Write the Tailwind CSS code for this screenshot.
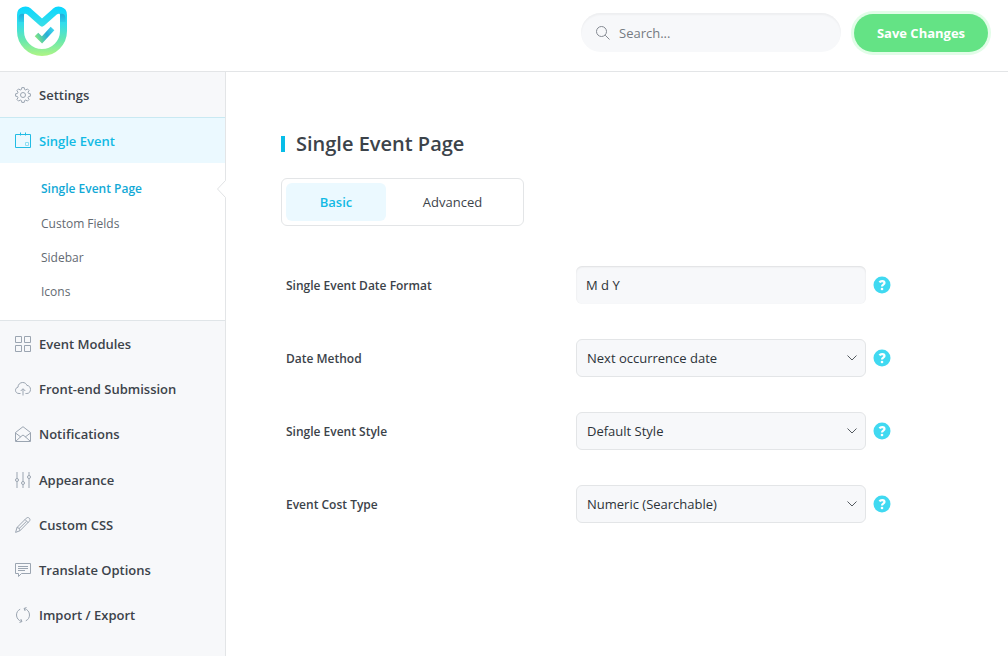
<!DOCTYPE html>
<html lang="en">
<head>
<meta charset="utf-8">
<meta name="viewport" content="width=device-width, initial-scale=1">
<title>Single Event Page</title>
<script src="https://cdn.jsdelivr.net/npm/@tailwindcss/browser@4"></script>
</head>
<body class="flex min-h-screen flex-col bg-white font-['Segoe_UI','Open_Sans','Noto_Sans',sans-serif] text-[13px] text-[#3c434a]">
<header class="flex h-[72px] shrink-0 items-start justify-between border-b border-[#e3e5e7] pr-5 pl-4">
  <a href="#" aria-label="Home" class="mt-1.5">
    <svg width="52" height="52" viewBox="16 6 52 52" fill="none">
      <defs>
        <linearGradient id="body" x1="0" y1="7" x2="0" y2="56" gradientUnits="userSpaceOnUse"><stop stop-color="#0bd7ff"/><stop offset=".35" stop-color="#35ddea"/><stop offset=".68" stop-color="#68e8ae"/><stop offset="1" stop-color="#b0f584"/></linearGradient>
        <linearGradient id="shade" x1="0" y1="13" x2="0" y2="25" gradientUnits="userSpaceOnUse"><stop stop-color="#24a9d8"/><stop offset="1" stop-color="#24a9d8" stop-opacity="0"/></linearGradient>
        <linearGradient id="tick" x1="36" y1="38" x2="53" y2="30" gradientUnits="userSpaceOnUse"><stop stop-color="#86e582"/><stop offset=".35" stop-color="#46c5b4"/><stop offset=".6" stop-color="#27add9"/><stop offset="1" stop-color="#3bd3ec"/></linearGradient>
      </defs>
      <path d="M20.500 31V15C20.500 10 26 9 29 11.500L42 23L55 11.500C58 9 63.500 10 63.500 15V31a21.500 21.500 0 0 1-43 0Z" stroke="url(#body)" stroke-width="7" stroke-linejoin="round"/>
      <path d="M18.500 22V18c0-3 2-5 5.500-4v8ZM65.500 22V18c0-3-2-5-5.500-4v8Z" fill="url(#shade)"/>
      <path d="M36.500 34.500l5.500 5.500L52.500 28.500" stroke="url(#tick)" stroke-width="5"/>
    </svg>
  </a>
  <div class="flex items-center gap-[13px] pt-[13px]">
    <label class="flex h-[39px] w-[260px] items-center gap-2 rounded-full bg-[#f7f8fa] px-3.5 shadow-[inset_0_2px_2px_rgba(0,0,0,0.04)]">
      <svg width="16" height="16" viewBox="0 0 16 16" fill="none" stroke="#858a92" class="shrink-0"><circle cx="6.500" cy="6.500" r="5"/><path d="M10.200 10.200L14.500 14.500"/></svg>
      <input type="search" aria-label="Search" placeholder="Search..." class="min-w-0 flex-1 bg-transparent pt-0.5 outline-none placeholder:text-[#757b82]">
    </label>
    <button type="button" class="h-[38px] w-[134px] rounded-full bg-[#64e385] pt-0.5 font-bold text-white ring-[3px] ring-[#e2fde8]">Save Changes</button>
  </div>
</header>

<div class="flex flex-1">
  <nav aria-label="Settings sections" class="w-[226px] shrink-0 border-r border-[#e3e5e7] bg-[#f7f8fa] font-semibold">
    <a href="#" class="flex h-[45px] items-center gap-2 pl-[15px]">
      <svg width="16" height="16" viewBox="0 0 16 16" fill="none" stroke="#9ba5b1"><circle cx="8" cy="8" r="2.500"/><path stroke-linejoin="round" d="M6.800.600h2.400l.4 1.900 1.200.5 1.600-1.100 1.700 1.700L13 5.200l.5 1.200 1.900.4v2.400l-1.900.4-.5 1.200 1.100 1.600-1.700 1.700-1.600-1.100-1.200.5-.4 1.900H6.800l-.4-1.900-1.200-.5-1.600 1.100-1.700-1.700L3 10.800l-.5-1.200-1.900-.4V6.800l1.900-.4L3 5.200 1.900 3.600l1.700-1.700L5.200 3l1.200-.5Z"/></svg>
      <span class="pt-0.5">Settings</span>
    </a>
    <a href="#" class="flex h-[46px] items-center gap-2 border-t border-[#c9e9f2] bg-[#ebf9ff] pl-[15px] text-[#12bae4]">
      <svg width="17" height="17" viewBox="0 0 17 17" fill="none" stroke="#22bce4" class="-mr-px"><path d="M.500 2.500h15v13H.500ZM5.500.500v3M10.500.500v3"/><path stroke="#8eddf1" d="M10.500 10.500h3v3h-3Z"/></svg>
      <span class="pt-0.5">Single Event</span>
    </a>
    <div class="relative border-b border-[#e0e5e8] bg-white pt-2 pb-3 pl-[41px] text-[12px] font-normal text-[#636a72]">
      <a href="#" class="flex h-[35px] items-center font-semibold text-[#12a9d6]">Single Event Page</a>
      <a href="#" class="flex h-[34px] items-center pt-0.5">Custom Fields</a>
      <a href="#" class="flex h-[34px] items-center pt-0.5">Sidebar</a>
      <a href="#" class="flex h-[34px] items-center pt-0.5">Icons</a>
      <svg width="9" height="18" viewBox="0 0 9 18" fill="#fff" class="absolute top-[17px] -right-px"><path d="M9 0v18L.500 9Z"/><path d="M8.500.500L.500 9l8 8.500" fill="none" stroke="#e0e2e4"/></svg>
    </div>
    <a href="#" class="flex h-[45px] items-center gap-2 pl-[15px]">
      <svg width="16" height="16" viewBox="0 0 16 16" fill="none" stroke="#9ba5b1"><path d="M.500.500h6v6h-6ZM9.500.500h6v6h-6ZM.500 9.500h6v6h-6ZM9.500 9.500h6v6h-6Z"/></svg>
      <span class="pt-0.5">Event Modules</span>
    </a>
    <a href="#" class="flex h-[45px] items-center gap-2 pl-[15px]">
      <svg width="16" height="16" viewBox="0 0 16 16" fill="none" stroke="#9ba5b1"><path d="M5.500 12.500H4C1.900 12.500.500 11.100.500 9.300.500 7.600 1.500 6.500 3 6.200 3 3.500 5 1.500 7.700 1.500c2 0 3.600 1.100 4.200 2.900 2.100.1 3.600 1.800 3.600 4 0 2.400-1.500 4.100-3.600 4.100h-1.400M8 14.500V8M5.700 10L8 7.700 10.300 10"/></svg>
      <span class="pt-0.5">Front-end Submission</span>
    </a>
    <a href="#" class="flex h-[46px] items-center gap-2 pl-[15px]">
      <svg width="16" height="16" viewBox="0 0 16 16" fill="none" stroke="#9ba5b1"><path d="M.500 6.500L8 .700l7.500 5.800v9H.500ZM.500 7l5.300 4M15.500 7l-5.300 4M1 15l5-4.500 2-1.500 2 1.500 5 4.500"/></svg>
      <span class="pt-0.5">Notifications</span>
    </a>
    <a href="#" class="flex h-[45px] items-center gap-2 pl-[15px]">
      <svg width="16" height="16" viewBox="0 0 16 16" fill="none" stroke="#9ba5b1"><path d="M2 0v6.500M2 9.500V16M8 0v9.500M8 12.500V16M14 0v3.500M14 6.500V16"/><circle cx="2" cy="8" r="1.500"/><circle cx="8" cy="11" r="1.500"/><circle cx="14" cy="5" r="1.500"/></svg>
      <span class="pt-0.5">Appearance</span>
    </a>
    <a href="#" class="flex h-[45px] items-center gap-2 pl-[15px]">
      <svg width="16" height="16" viewBox="0 0 16 16" fill="none" stroke="#9ba5b1" stroke-linejoin="round"><path d="M.600 15.400L2 10.500 11.300 1.200c1-1 2.200-.8 3 0s1 2 0 3L5 13.700ZM2 10.500c1.700.1 2.800 1.400 3 3.200M10 2.500L13.300 5.800M4 11.700l7.500-7.400"/></svg>
      <span class="pt-0.5">Custom CSS</span>
    </a>
    <a href="#" class="flex h-[45px] items-center gap-2 pl-[15px]">
      <svg width="16" height="16" viewBox="0 0 16 16" fill="none" stroke="#9ba5b1"><path d="M.500 1.500h15v10h-9l-3 3v-3h-3ZM3 4.500h10M3 6.500h10M3 8.500h7"/></svg>
      <span class="pt-0.5">Translate Options</span>
    </a>
    <a href="#" class="flex h-[45px] items-center gap-2 pl-[15px]">
      <svg width="16" height="16" viewBox="0 0 16 16" fill="none" stroke="#9ba5b1"><path d="M5.200 2.200C2.800 3.300 1.500 5.500 1.500 8c0 3 2 5.600 5 6.500M4.500 15.500l2.500-1-1.200-2.500M10.800 13.800c2.400-1.100 3.700-3.300 3.700-5.800 0-3-2-5.600-5-6.500M11.500.500L9 1.500 10.200 4"/></svg>
      <span class="pt-0.5">Import / Export</span>
    </a>
  </nav>

  <main class="min-w-0 flex-1 pt-[58px] pr-6 pl-[55px]">
    <div class="flex items-center gap-[11px]">
      <span class="h-4 w-1 bg-[#08bde8]"></span>
      <h1 class="text-[20px] leading-7 font-semibold">Single Event Page</h1>
    </div>
    <div role="tablist" class="mt-5 flex h-12 w-[243px] rounded-md border border-[#e3e5e7] p-1">
      <button type="button" role="tab" aria-selected="true" class="w-[100px] rounded-md bg-[#ebf9ff] pt-0.5 font-semibold text-[#12bae4]">Basic</button>
      <button type="button" role="tab" aria-selected="false" class="flex-1 pt-0.5">Advanced</button>
    </div>
    <form class="mt-10 flex flex-col gap-[35px] pl-[5px]">
      <div class="flex h-[38px] items-center">
        <label for="format" class="w-[290px] pt-0.5 text-[12px] font-semibold">Single Event Date Format</label>
        <input id="format" type="text" value="M d Y" class="h-[38px] w-[290px] rounded-md bg-[#f7f8fa] px-2.5 text-[#2c3338] shadow-[inset_0_1px_2px_rgba(0,0,0,0.1)] outline-none">
        <button type="button" aria-label="Help" class="ml-[7px]"><svg width="18" height="18" viewBox="0 0 18 18"><circle cx="9" cy="9" r="8.500" fill="#40d9f1"/><path d="M6.500 6.300C7.500 4.700 11.500 4.500 11.500 7c0 1.700-2.500 1.700-2.500 3.500" fill="none" stroke="#fff" stroke-width="2.200"/><circle cx="9" cy="13" r="1.300" fill="#fff"/></svg></button>
      </div>
      <div class="flex h-[38px] items-center">
        <label for="method" class="w-[290px] pt-0.5 text-[12px] font-semibold">Date Method</label>
        <div class="relative w-[290px]">
          <select id="method" class="h-[38px] w-full appearance-none rounded-md border border-[#e3e5e7] bg-[#f7f8fa] px-2.5 pt-0.5 text-[#2c3338]"><option>Next occurrence date</option></select>
          <svg width="10" height="6" viewBox="0 0 10 6" fill="none" stroke="#555b61" class="pointer-events-none absolute top-4 right-[9px]"><path d="M.500.500L5 5 9.500.500"/></svg>
        </div>
        <button type="button" aria-label="Help" class="ml-[7px]"><svg width="18" height="18" viewBox="0 0 18 18"><circle cx="9" cy="9" r="8.500" fill="#40d9f1"/><path d="M6.500 6.300C7.500 4.700 11.500 4.500 11.500 7c0 1.700-2.500 1.700-2.500 3.500" fill="none" stroke="#fff" stroke-width="2.200"/><circle cx="9" cy="13" r="1.300" fill="#fff"/></svg></button>
      </div>
      <div class="flex h-[38px] items-center">
        <label for="style" class="w-[290px] pt-0.5 text-[12px] font-semibold">Single Event Style</label>
        <div class="relative w-[290px]">
          <select id="style" class="h-[38px] w-full appearance-none rounded-md border border-[#e3e5e7] bg-[#f7f8fa] px-2.5 pt-0.5 text-[#2c3338]"><option>Default Style</option></select>
          <svg width="10" height="6" viewBox="0 0 10 6" fill="none" stroke="#555b61" class="pointer-events-none absolute top-4 right-[9px]"><path d="M.500.500L5 5 9.500.500"/></svg>
        </div>
        <button type="button" aria-label="Help" class="ml-[7px]"><svg width="18" height="18" viewBox="0 0 18 18"><circle cx="9" cy="9" r="8.500" fill="#40d9f1"/><path d="M6.500 6.300C7.500 4.700 11.500 4.500 11.500 7c0 1.700-2.500 1.700-2.500 3.500" fill="none" stroke="#fff" stroke-width="2.200"/><circle cx="9" cy="13" r="1.300" fill="#fff"/></svg></button>
      </div>
      <div class="flex h-[38px] items-center">
        <label for="cost" class="w-[290px] pt-0.5 text-[12px] font-semibold">Event Cost Type</label>
        <div class="relative w-[290px]">
          <select id="cost" class="h-[38px] w-full appearance-none rounded-md border border-[#e3e5e7] bg-[#f7f8fa] px-2.5 pt-0.5 text-[#2c3338]"><option>Numeric (Searchable)</option></select>
          <svg width="10" height="6" viewBox="0 0 10 6" fill="none" stroke="#555b61" class="pointer-events-none absolute top-4 right-[9px]"><path d="M.500.500L5 5 9.500.500"/></svg>
        </div>
        <button type="button" aria-label="Help" class="ml-[7px]"><svg width="18" height="18" viewBox="0 0 18 18"><circle cx="9" cy="9" r="8.500" fill="#40d9f1"/><path d="M6.500 6.300C7.500 4.700 11.500 4.500 11.500 7c0 1.700-2.500 1.700-2.500 3.500" fill="none" stroke="#fff" stroke-width="2.200"/><circle cx="9" cy="13" r="1.300" fill="#fff"/></svg></button>
      </div>
    </form>
  </main>
</div>
</body>
</html>
